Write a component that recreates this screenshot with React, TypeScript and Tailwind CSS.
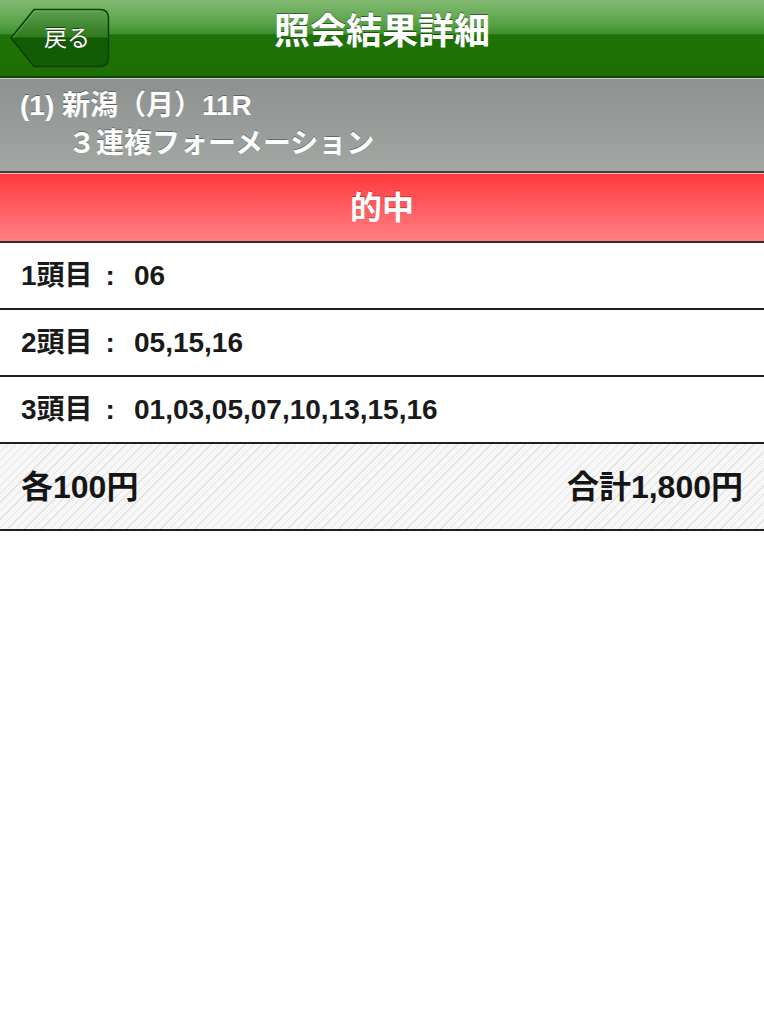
const jp = { fontFamily: '"Liberation Sans", "Noto Sans CJK JP", sans-serif' }

const ROWS = [
  { label: '1頭目', value: '06' },
  { label: '2頭目', value: '05,15,16' },
  { label: '3頭目', value: '01,03,05,07,10,13,15,16' },
]

function BackButton() {
  return (
    <button className="relative ml-[10px] h-[60px] w-[100px]">
      <svg className="absolute inset-0" width="100" height="60" viewBox="0 0 100 60">
        <defs>
          <linearGradient id="bb" x1="0" y1="0" x2="0" y2="1">
            <stop offset="0" stopColor="#5f9f4f" />
            <stop offset="0.48" stopColor="#2f7a1e" />
            <stop offset="0.5" stopColor="#135c04" />
            <stop offset="1" stopColor="#125a05" />
          </linearGradient>
        </defs>
        <path
          d="M1 30 L24 1.5 H90 Q98.5 1.5 98.5 10 V50 Q98.5 58.5 90 58.5 H24 Z"
          fill="url(#bb)"
          stroke="#0d4004"
          strokeWidth="1.5"
        />
        <path d="M3 30 L25 3 H90" fill="none" stroke="#8cc07c" strokeOpacity="0.5" strokeWidth="1" />
      </svg>
      <span
        className="relative text-[23px] text-white [text-shadow:0_-1px_0_rgba(0,0,0,0.5)]"
        style={{ ...jp, marginLeft: 14 }}
      >
        戻る
      </span>
    </button>
  )
}

export default function App() {
  return (
    <div className="min-h-[1024px] w-[764px] bg-white" style={jp}>
      <div className="relative flex h-[78px] items-center border-b-2 border-[#133f0a] bg-[linear-gradient(to_bottom,#82ba72_0%,#5aa34a_30%,#3f9030_44%,#1e7306_46%,#1d6f05_100%)]">
        <BackButton />
        <h1 className="absolute left-0 right-0 top-[11px] text-center text-[36px] font-bold leading-[42px] text-white [text-shadow:0_-1px_0_rgba(0,0,0,0.45)]">
          照会結果詳細
        </h1>
      </div>

      <div className="flex h-[95px] flex-col border-t border-[#c9ccca] border-b-2 border-b-[#4a3e44] bg-[linear-gradient(to_bottom,#8d918f,#a2a7a4)] px-[20px] pt-[8px] text-[28px] font-bold leading-[38px] text-white [text-shadow:0_-1px_0_rgba(0,0,0,0.35)]">
        <div>(1) 新潟（月）11R</div>
        <div className="pl-[48px]">３連複フォーメーション</div>
      </div>

      <div className="flex h-[70px] items-center justify-center border-t border-[#ffb4b6] border-b-2 border-b-[#3a2a2c] bg-[linear-gradient(to_bottom,#ff3a3e,#ff7f84)] text-[32px] font-bold text-white [text-shadow:0_-1px_0_rgba(120,0,0,0.4)]">
        的中
      </div>

      {ROWS.map((row) => (
        <div
          key={row.label}
          className="flex h-[67px] items-center border-b-2 border-[#1f1f1f] px-[21px] text-[28px] font-bold text-[#1a1a1a]"
        >
          <span className="flex w-[113px]">
            {row.label}
            <span className="ml-[13px]">:</span>
          </span>
          <span>{row.value}</span>
        </div>
      ))}

      <div className="flex h-[87px] items-center justify-between border-b-2 border-[#1f1f1f] bg-[repeating-linear-gradient(135deg,#f7f7f7_0px,#f7f7f7_5px,#e2e2e2_5px,#e2e2e2_6px)] px-[21px] text-[32px] font-bold text-[#151515]">
        <span>各100円</span>
        <span>合計1,800円</span>
      </div>
    </div>
  )
}
